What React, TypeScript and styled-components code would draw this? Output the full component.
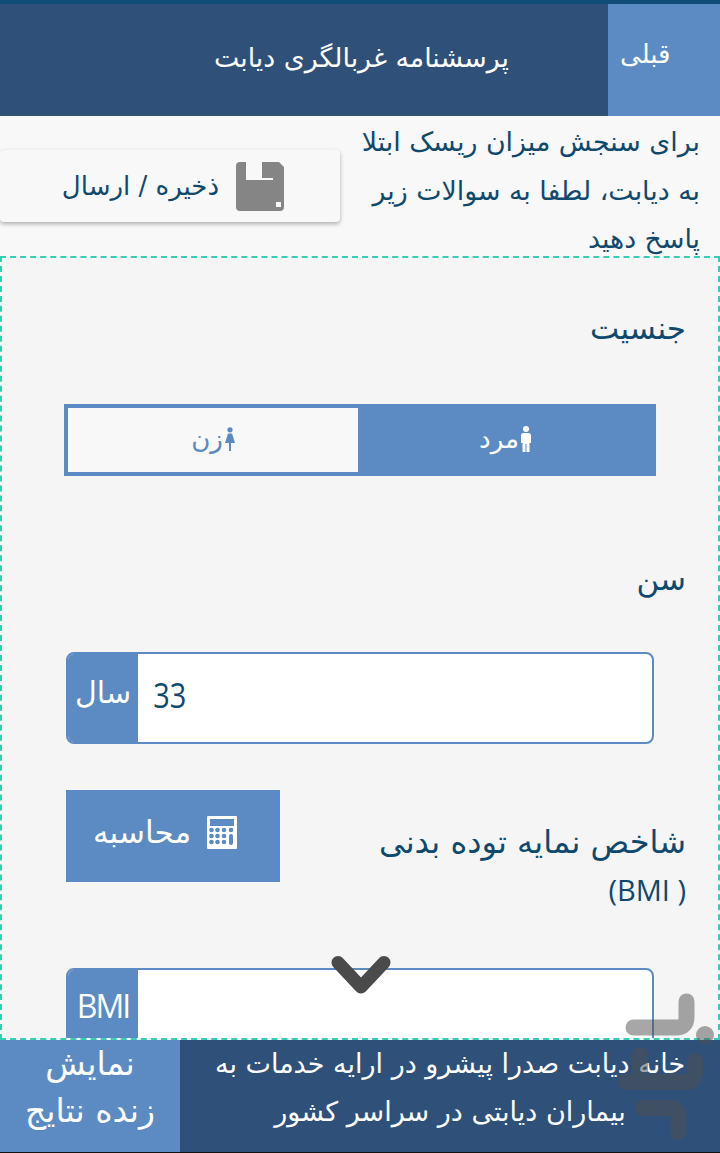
import React from 'react';
import styled, { createGlobalStyle } from 'styled-components';

const GlobalStyle = createGlobalStyle`
  html, body {
    margin: 0;
    padding: 0;
    background: #f7f7f7;
  }
  * {
    box-sizing: border-box;
  }
`;

const color = {
  navy: '#2f5078',
  blue: '#5b8bc2',
  text: '#0f4a6e',
  strip: '#0f4d78',
};

const Page = styled.div`
  position: relative;
  display: flex;
  flex-direction: column;
  width: 720px;
  height: 1153px;
  overflow: hidden;
  direction: rtl;
  font-family: "DejaVu Sans", "Noto Sans", sans-serif;
  color: ${color.text};
  background: #f8f8f8;
  border-top: 4px solid ${color.strip};
`;

const Header = styled.header`
  display: flex;
  flex: 0 0 112px;
  background: ${color.navy};
  color: #fff;
`;

const BackButton = styled.div`
  display: flex;
  align-items: center;
  justify-content: flex-end;
  width: 112px;
  padding: 0 0 12px 12px;
  background: ${color.blue};
  font-size: 26px;
`;

const HeaderTitle = styled.h1`
  flex: 1;
  margin: 0;
  padding: 0 99px 0 0;
  font-size: 26.8px;
  font-weight: 400;
  line-height: 108px;
`;

const Intro = styled.section`
  display: flex;
  justify-content: space-between;
  flex: 0 0 140px;
  height: 140px;
  min-height: 0;
  padding-right: 20px;
`;

const IntroText = styled.p`
  width: 350px;
  margin: 0;
  padding-top: 2px;
  font-size: 26.8px;
  line-height: 48.5px;
  white-space: nowrap;
`;

const SaveButton = styled.div`
  display: flex;
  align-items: center;
  gap: 17px;
  align-self: flex-start;
  width: 340px;
  height: 72px;
  margin-top: 34px;
  padding-right: 56px;
  background: #f8f8f8;
  border-radius: 4px;
  box-shadow: 0 2px 4px rgba(0, 0, 0, 0.3);
  font-size: 26px;
`;

const Panel = styled.main`
  position: relative;
  flex: 1;
  min-height: 0;
  overflow: hidden;
  padding: 0 32px 0 64px;
  background: #f5f5f5;
  border: 2px dashed #35cdb4;
`;

const Label = styled.div`
  font-size: 31px;
  line-height: 48px;
`;

const GenderLabel = styled(Label)`
  margin-top: 46px;
`;

const AgeLabel = styled(Label)`
  margin-top: 79px;
`;

const GenderToggle = styled.div`
  display: flex;
  width: 592px;
  height: 72px;
  margin: 52px 30px 0 0;
  border: 4px solid ${color.blue};
`;

const GenderOption = styled.div<{ $active?: boolean }>`
  display: flex;
  align-items: center;
  justify-content: center;
  gap: 2px;
  flex: ${(p) => (p.$active ? '0 0 294px' : '1')};
  padding-bottom: 2px;
  background: ${(p) => (p.$active ? color.blue : '#f8f8f8')};
  color: ${(p) => (p.$active ? '#fff' : color.blue)};
  font-size: 26px;
`;

const InputGroup = styled.div`
  display: flex;
  direction: ltr;
  flex: none;
  width: 588px;
  height: 92px;
  overflow: hidden;
  background: #fff;
  border: 2px solid ${color.blue};
  border-radius: 8px;
`;

const AgeGroup = styled(InputGroup)`
  margin: 49px 32px 0 0;
`;

const BmiGroup = styled(InputGroup)`
  margin: 54px 32px 0 0;
`;

const InputAddon = styled.div`
  display: flex;
  align-items: center;
  justify-content: center;
  flex: 0 0 70px;
  padding-bottom: 12px;
  background: ${color.blue};
  color: #fff;
  font-size: 30px;
`;

const BmiAddon = styled(InputAddon)`
  padding-bottom: 18px;
  font-family: "Open Sans", sans-serif;
  font-size: 32px;
  letter-spacing: -2px;
`;

const ValueInput = styled.input`
  flex: 1;
  min-width: 0;
  padding: 0 15px 6px 18px;
  border: 0;
  outline: 0;
  background: #fff;
  color: ${color.text};
  font-family: "Open Sans", sans-serif;
  font-size: 34px;
  transform: scaleX(0.85);
  transform-origin: left center;
`;

const BmiRow = styled.div`
  display: flex;
  justify-content: space-between;
  margin-top: 46px;
`;

const BmiLabel = styled.div`
  padding-top: 28px;
  font-size: 32px;
  line-height: 48px;
  white-space: nowrap;
`;

const BmiLatin = styled.span`
  font-family: "Open Sans", sans-serif;
  font-size: 29px;
`;

const CalcButton = styled.div`
  display: flex;
  align-items: center;
  gap: 16px;
  flex: 0 0 214px;
  height: 92px;
  padding: 0 43px 8px 0;
  background: ${color.blue};
  color: #fff;
  font-size: 31px;
`;

const Footer = styled.footer`
  display: flex;
  flex: 0 0 113px;
  background: ${color.navy};
  color: #fff;
  border-bottom: 1px solid #111;
`;

const FooterText = styled.div`
  flex: 1;
  font-size: 27px;
  line-height: 48px;
  text-align: center;
  white-space: nowrap;
`;

const LiveButton = styled.div`
  flex: 0 0 180px;
  background: ${color.blue};
  font-size: 33px;
  line-height: 47px;
  text-align: center;
  white-space: nowrap;
`;

const ScrollHint = styled.svg`
  position: absolute;
  top: 950px;
  left: 330px;
`;

const Watermark = styled.svg`
  position: absolute;
  top: 981px;
  left: 610px;
`;

const FloppyIcon = () => (
  <svg width="48" height="49" viewBox="0 0 48 49">
    <path
      fillRule="evenodd"
      fill="#858585"
      d="M4 0h6v18h27V0h6l5 5v40q0 4-4 4H4q-4 0-4-4V4q0-4 4-4zM40 40v5h5v-5z"
    />
    <rect x="26" y="0" width="11" height="16" fill="#858585" />
  </svg>
);

const CalcIcon = () => (
  <svg width="30" height="33" viewBox="0 0 30 33">
    <path
      fillRule="evenodd"
      fill="#fff"
      d="M1 0h28q1 0 1 1v31q0 1-1 1H1q-1 0-1-1V1q0-1 1-1zM3 3v7h24V3z"
    />
    {[14, 20, 26].map((y) =>
      [4.500, 10.500, 17, 24].map((x) =>
        x === 24 && y > 14 ? null : (
          <circle key={`${x}-${y}`} cx={x} cy={y} r="2.300" fill={color.blue} />
        ),
      ),
    )}
    <rect x="22" y="18" width="4" height="11" rx="2" fill={color.blue} />
  </svg>
);

const ManIcon = () => (
  <svg width="10" height="26" viewBox="0 0 10 26" fill="#fff">
    <circle cx="5" cy="3" r="3" />
    <path d="M2.500 7h5Q10 7 10 9.500V17H8.500v9H5.500v-8H4.500v8H1.500V17H0V9.500Q0 7 2.500 7z" />
  </svg>
);

const WomanIcon = () => (
  <svg width="10" height="24" viewBox="0 0 10 24" fill={color.blue}>
    <circle cx="5" cy="2.800" r="2.600" />
    <path d="M3 6.500h4L10 16H6v8H4v-8H0z" />
  </svg>
);

export default function App() {
  return (
    <Page>
      <GlobalStyle />
      <Header>
        <BackButton>قبلی</BackButton>
        <HeaderTitle>پرسشنامه غربالگری دیابت</HeaderTitle>
      </Header>
      <Intro>
        <IntroText>
          برای سنجش میزان ریسک ابتلا
          <br />
          به دیابت، لطفا به سوالات زیر
          <br />
          پاسخ دهید
        </IntroText>
        <SaveButton>
          <FloppyIcon />
          <span>ذخیره / ارسال</span>
        </SaveButton>
      </Intro>
      <Panel>
        <GenderLabel>جنسیت</GenderLabel>
        <GenderToggle>
          <GenderOption $active>
            <ManIcon />
            <span>مرد</span>
          </GenderOption>
          <GenderOption>
            <WomanIcon />
            <span>زن</span>
          </GenderOption>
        </GenderToggle>
        <AgeLabel>سن</AgeLabel>
        <AgeGroup>
          <InputAddon>سال</InputAddon>
          <ValueInput readOnly value="33" />
        </AgeGroup>
        <BmiRow>
          <BmiLabel>
            شاخص نمایه توده بدنی
            <br />
            <BmiLatin>( BMI)</BmiLatin>
          </BmiLabel>
          <CalcButton>
            <CalcIcon />
            <span>محاسبه</span>
          </CalcButton>
        </BmiRow>
        <BmiGroup>
          <BmiAddon>BMI</BmiAddon>
          <ValueInput readOnly value="" />
        </BmiGroup>
      </Panel>
      <Footer>
        <FooterText>
          خانه دیابت صدرا پیشرو در ارایه خدمات به
          <br />
          بیماران دیابتی در سراسر کشور
        </FooterText>
        <LiveButton>
          نمایش
          <br />
          زنده نتایج
        </LiveButton>
      </Footer>
      <ScrollHint width="62" height="44" viewBox="0 0 62 44">
        <path
          d="M8 8.500 31 33 54 8.500"
          fill="none"
          stroke="#4a4a4a"
          strokeWidth="13"
          strokeLinecap="round"
          strokeLinejoin="round"
        />
      </ScrollHint>
      <Watermark width="110" height="165" viewBox="0 0 110 165">
        <g fill="none" stroke="rgba(80,80,80,0.5)" strokeWidth="16" strokeLinecap="round">
          <path d="M23.500 42.500H66Q76.500 42.500 76.500 32V16.500" />
          <path d="M16 97H75Q85 97 85 87V76M30 70V97" />
          <path d="M33 123H60Q68.500 123 68.500 132V147" />
        </g>
        <circle cx="95" cy="50" r="9" fill="rgba(80,80,80,0.5)" />
      </Watermark>
    </Page>
  );
}
